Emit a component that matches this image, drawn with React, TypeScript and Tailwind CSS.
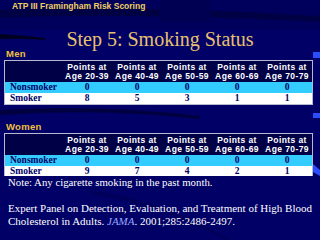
import React from 'react';

const ages = ['20-39', '40-49', '50-59', '60-69', '70-79'];

type Points = { non: number[]; smoker: number[] };

const men: Points = { non: [0, 0, 0, 0, 0], smoker: [8, 5, 3, 1, 1] };
const women: Points = { non: [0, 0, 0, 0, 0], smoker: [9, 7, 4, 2, 1] };

const serif = { fontFamily: '"Liberation Serif", "Times New Roman", serif' };
const sans = { fontFamily: '"Liberation Sans", Arial, sans-serif' };

function SmokingTable({ data, clipLast }: { data: Points; clipLast?: boolean }) {
  return (
    <div className={`mx-[4px] w-[309px] border border-[#b8b8d0] ${clipLast ? 'border-b-0' : ''}`}>
      {/* header */}
      <div className="grid grid-cols-[57px_repeat(5,50px)] h-[21px] bg-[#000046] text-white font-bold text-[8.5px] leading-[8.5px] tracking-[0.4px]" style={sans}>
        <div />
        {ages.map((a) => (
          <div key={a} className="flex flex-col items-center justify-center">
            <span>Points at</span>
            <span>Age {a}</span>
          </div>
        ))}
      </div>
      {/* nonsmoker */}
      <div className="grid grid-cols-[57px_repeat(5,50px)] h-[11px] bg-[#33ccff] text-[#000066] font-bold text-[9.5px] leading-[11px]" style={serif}>
        <div className="pl-[5px]">Nonsmoker</div>
        {data.non.map((v, i) => (
          <div key={i} className="text-center">{v}</div>
        ))}
      </div>
      <div
        className={`grid grid-cols-[57px_repeat(5,50px)] bg-white text-[#000066] font-bold text-[9.5px] overflow-hidden ${clipLast ? 'h-[10px] pt-[1px] leading-[8px]' : 'h-[11px] leading-[11px]'}`}
        style={serif}
      >
        <div className="pl-[5px]">Smoker</div>
        {data.smoker.map((v, i) => (
          <div key={i} className="text-center">{v}</div>
        ))}
      </div>
    </div>
  );
}

export default function App() {
  return (
    <div className="relative w-[320px] h-[240px] overflow-hidden bg-[#000066]">
      {/* background swooshes */}
      <svg className="absolute inset-0" width="320" height="240" viewBox="0 0 320 240">
        <rect x="0" y="0" width="320" height="30" fill="#00005c" />
        <path d="M0 10 Q120 4 320 16 L320 22 Q120 12 0 18 Z" fill="#000040" opacity="0.8" />
        <path d="M0 34 Q20 35 45 38 L45 40 Q20 38 0 39 Z" fill="#000020" />
        <rect x="160" y="0" width="50" height="22" fill="#000052" />
        <path d="M0 110 Q100 104 200 116 L200 119 Q100 108 0 115 Z" fill="#000040" />
        <path d="M90 190 Q160 200 230 240 L226 240 Q160 204 90 194 Z" fill="#00005a" />
        <rect x="313" y="52" width="7" height="6" fill="#2c4cff" />
        <rect x="313" y="113" width="7" height="5" fill="#2c4cff" />
        <path d="M313 164 L320 170 L320 176 L313 172 Z" fill="#2c4cff" />
      </svg>

      <div className="relative flex flex-col">
        <div className="h-[12px] pl-[12px] pt-[2px] text-[8.5px] leading-[9px] font-bold text-[#f0d060]" style={sans}>
          ATP III Framingham Risk Scoring
        </div>

        <div className="mt-[15px] h-[22px] text-center text-[20px] leading-[24px] text-[#e8c070]" style={serif}>
          Step 5: Smoking Status
        </div>

        <div className="h-[9px] pl-[6px] text-[9.5px] leading-[9px] font-bold tracking-[0.3px] text-[#f0c040]" style={sans}>
          Men
        </div>
        <div className="h-[2px]" />
        <SmokingTable data={men} />

        <div className="mt-[17px] h-[9px] pl-[6px] text-[9.5px] leading-[9px] font-bold tracking-[0.3px] text-[#f0c040]" style={sans}>
          Women
        </div>
        <div className="h-[2px]" />
        <SmokingTable data={women} clipLast />

        <div className="pl-[8px] text-[10.8px] leading-[13px] text-white" style={serif}>
          Note: Any cigarette smoking in the past month.
        </div>

        <div className="mt-[13px] pl-[8px] text-[11px] leading-[13px] text-white" style={serif}>
          <div>Expert Panel on Detection, Evaluation, and Treatment of High Blood</div>
          <div>
            Cholesterol in Adults. <i className="text-[#9aa8ff]">JAMA</i>. 2001;285:2486-2497.
          </div>
        </div>
      </div>
    </div>
  );
}
